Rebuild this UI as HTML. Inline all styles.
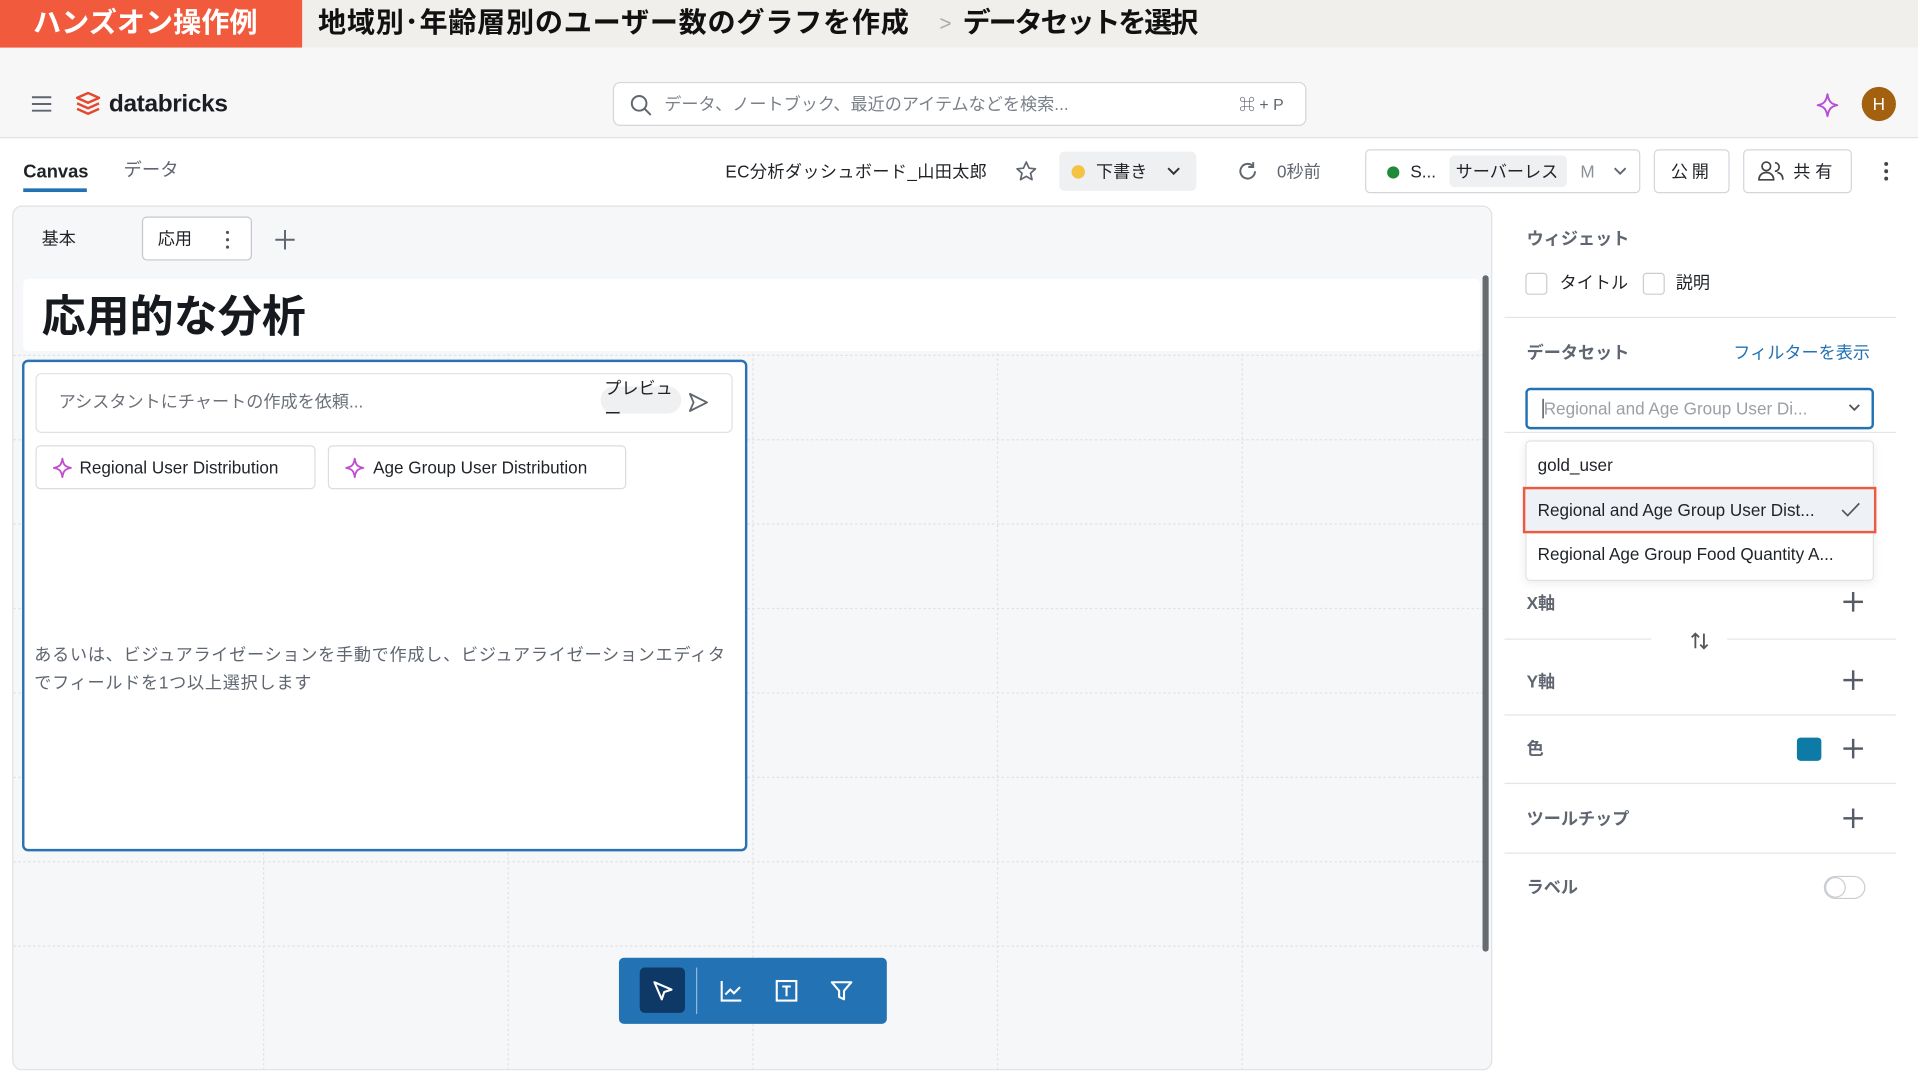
<!DOCTYPE html>
<html><head><meta charset="utf-8">
<style>
*{box-sizing:border-box;margin:0;padding:0}
html,body{width:1918px;height:1080px;overflow:hidden;background:#fff}
body{font-family:"Liberation Sans","Noto Sans CJK JP",sans-serif;color:#1f2328}
#w{position:absolute;left:0;top:0;width:1568px;height:883px;transform:scale(1.22321);transform-origin:0 0;background:#fff}
.a{position:absolute}
.t{position:absolute;white-space:nowrap;line-height:1}
.b{border:1px solid #d3d6db;border-radius:4px;background:#fff}
.gray{color:#5f6670}
.sec{font-weight:bold;font-size:14px;color:#5f6670}
.plus{position:absolute;width:16px;height:16px}
.plus:before,.plus:after{content:"";position:absolute;background:#555c66}
.plus:before{left:7px;top:0;width:1.6px;height:16px}
.plus:after{top:7px;left:0;height:1.6px;width:16px}
.hl{position:absolute;left:1230px;width:320px;height:1px;background:#e2e5e9}
</style></head><body><div id="w">
<!-- banner -->
<div class="a" style="left:0;top:0;width:1568px;height:39px;background:#f0efec"></div>
<div class="a" style="left:0;top:0;width:247px;height:39px;background:#f25a3e"></div>
<div class="t" style="left:27px;top:7px;font-size:23px;font-weight:bold;color:#fff">ハンズオン操作例</div>
<div class="t" style="left:260px;top:7px;font-size:23px;font-weight:bold;color:#111;letter-spacing:0.6px">地域別･年齢層別のユーザー数のグラフを作成</div>
<div class="t" style="left:768px;top:11px;font-size:17px;color:#aaa">&gt;</div>
<div class="t" style="left:787px;top:7px;font-size:23px;font-weight:bold;color:#111;letter-spacing:-1.8px">データセットを選択</div>
<!-- header -->
<div class="a" style="left:0;top:39px;width:1568px;height:74px;background:#f7f7f8;border-bottom:1px solid #dfe1e4"></div>
<svg class="a" style="left:26px;top:78px" width="16" height="14"><path d="M0 1.5h16M0 7h16M0 12.5h16" stroke="#5f6670" stroke-width="1.6"/></svg>
<svg class="a" style="left:62px;top:75px" width="20" height="21" viewBox="0 0 20 21"><path d="M1 5l9-4 9 4-9 4zM1 9.5l9 4 9-4M1 14l9 4 9-4" fill="none" stroke="#e4492e" stroke-width="2" stroke-linejoin="round"/></svg>
<div class="t" style="left:89px;top:75px;font-size:20px;font-weight:bold;color:#1b1f24;letter-spacing:-0.3px">databricks</div>
<div class="a b" style="left:501px;top:67px;width:567px;height:36px;border-radius:6px"></div>
<svg class="a" style="left:515px;top:77px" width="18" height="18"><circle cx="7.5" cy="7.5" r="6" fill="none" stroke="#5f6670" stroke-width="1.6"/><path d="M12 12l5 5" stroke="#5f6670" stroke-width="1.6"/></svg>
<div class="t gray" style="left:543px;top:78px;font-size:14px;color:#7a8089">データ、ノートブック、最近のアイテムなどを検索...</div>
<div class="t gray" style="left:1013px;top:79px;font-size:13px">⌘ + P</div>
<svg class="a" style="left:1485px;top:76px" width="18" height="20"><path d="M9 1C10 7 12 9 17 10 12 11 10 13 9 19 8 13 6 11 1 10 6 9 8 7 9 1Z" fill="none" stroke="#b84fd6" stroke-width="1.6" stroke-linejoin="round"/></svg>
<div class="a" style="left:1522px;top:71px;width:28px;height:28px;border-radius:50%;background:#a3600e;color:#fff;font-size:14px;text-align:center;line-height:28px">H</div>
<!-- tab row -->
<div class="t" style="left:19px;top:133px;font-size:15px;font-weight:bold">Canvas</div>
<div class="a" style="left:19px;top:154px;width:52px;height:3px;background:#2272b4"></div>
<div class="t gray" style="left:101px;top:132px;font-size:15px">データ</div>
<div class="t" style="left:593px;top:133px;font-size:14px;letter-spacing:0.3px">EC分析ダッシュボード_山田太郎</div>
<svg class="a" style="left:830px;top:131px" width="18" height="18"><path d="M9 1.5l2.3 5 5.2.5-4 3.6 1.2 5.3L9 13.2 4.3 15.9l1.2-5.3-4-3.6 5.2-.5z" fill="none" stroke="#5f6670" stroke-width="1.4" stroke-linejoin="round"/></svg>
<div class="a" style="left:866px;top:124px;width:112px;height:32px;border-radius:4px;background:#eef0f2"></div>
<div class="a" style="left:876px;top:135px;width:11px;height:11px;border-radius:50%;background:#f5c343"></div>
<div class="t" style="left:896px;top:133px;font-size:14px">下書き</div>
<svg class="a" style="left:954px;top:136px" width="11" height="8"><path d="M1 1.5l4.5 4.5 4.5-4.5" fill="none" stroke="#333" stroke-width="1.6"/></svg>
<svg class="a" style="left:1011px;top:131px" width="18" height="18"><path d="M15 9a6 6 0 1 1-2-4.5" fill="none" stroke="#5f6670" stroke-width="1.6"/><path d="M13.5 1.5v4h-4" fill="none" stroke="#5f6670" stroke-width="1.6"/></svg>
<div class="t gray" style="left:1044px;top:133px;font-size:14px">0秒前</div>
<div class="a b" style="left:1116px;top:122px;width:225px;height:36px"></div>
<div class="a" style="left:1134px;top:136px;width:10px;height:10px;border-radius:50%;background:#1f8a3a"></div>
<div class="t" style="left:1153px;top:133px;font-size:14px">S...</div>
<div class="a" style="left:1185px;top:127px;width:96px;height:26px;border-radius:4px;background:#eef0f2"></div>
<div class="t" style="left:1190px;top:133px;font-size:14px">サーバーレス</div>
<div class="t gray" style="left:1292px;top:133px;font-size:14px;color:#8a9098">M</div>
<svg class="a" style="left:1319px;top:136px" width="11" height="8"><path d="M1 1.5l4.5 4.5 4.5-4.5" fill="none" stroke="#5f6670" stroke-width="1.5"/></svg>
<div class="a b" style="left:1352px;top:122px;width:62px;height:36px"></div>
<div class="t" style="left:1366px;top:133px;font-size:14px;letter-spacing:3px">公開</div>
<div class="a b" style="left:1425px;top:122px;width:89px;height:36px"></div>
<svg class="a" style="left:1437px;top:131px" width="22" height="18"><circle cx="7" cy="5" r="3.5" fill="none" stroke="#444" stroke-width="1.4"/><path d="M1 16c0-4 3-6 6-6s6 2 6 6z" fill="none" stroke="#444" stroke-width="1.4"/><path d="M14 2a3.5 3.5 0 0 1 0 7M16 10c3 .5 4.5 2.5 4.5 6" fill="none" stroke="#444" stroke-width="1.4"/></svg>
<div class="t" style="left:1466px;top:133px;font-size:14px;letter-spacing:4px">共有</div>
<svg class="a" style="left:1539px;top:131px" width="6" height="18"><circle cx="3" cy="3" r="1.6" fill="#444"/><circle cx="3" cy="9" r="1.6" fill="#444"/><circle cx="3" cy="15" r="1.6" fill="#444"/></svg>
<!-- canvas -->
<div class="a" style="left:10px;top:168px;width:1210px;height:707px;background:#f6f7f9;border:1px solid #dfe1e4;border-radius:8px;overflow:hidden">
 <svg class="a" style="left:0;top:0" width="1210" height="707">
  <g stroke="#dfe2e6" stroke-width="1" stroke-dasharray="2 2">
   <path d="M204.5 120V707M404.5 120V707M604.5 120V707M804.5 120V707M1004.5 120V707"/>
   <path d="M0 121.5H1210M0 190.5H1210M0 259.5H1210M0 328.5H1210M0 397.5H1210M0 466.5H1210M0 535.5H1210M0 604.5H1210"/>
  </g>
 </svg>
</div>
<div class="t" style="left:34px;top:188px;font-size:14px">基本</div>
<div class="a b" style="left:116px;top:177px;width:90px;height:36px;border-color:#c3c8ce"></div>
<div class="t" style="left:129px;top:188px;font-size:14px">応用</div>
<svg class="a" style="left:184px;top:188px" width="4" height="16"><circle cx="2" cy="2" r="1.3" fill="#555"/><circle cx="2" cy="8" r="1.3" fill="#555"/><circle cx="2" cy="14" r="1.3" fill="#555"/></svg>
<svg class="a" style="left:225px;top:188px" width="16" height="16"><path d="M8 0v16M0 8h16" stroke="#5f6670" stroke-width="1.6"/></svg>
<div class="a" style="left:19px;top:228px;width:1191px;height:59px;background:#fff;border-radius:4px"></div>
<div class="t" style="left:34px;top:241px;font-size:36px;font-weight:bold;color:#161a1e">応用的な分析</div>
<div class="a" style="left:1212px;top:225px;width:5px;height:553px;border-radius:3px;background:#666b70"></div>
<!-- widget -->
<div class="a" style="left:18px;top:294px;width:593px;height:402px;background:#fff;border:2px solid #2c72b2;border-radius:5px"></div>
<div class="a b" style="left:29px;top:305px;width:570px;height:49px;border-radius:5px;border-color:#dfe1e4"></div>
<div class="t" style="left:48px;top:321px;font-size:14px;color:#6b7178">アシスタントにチャートの作成を依頼...</div>
<div class="a" style="left:491px;top:316px;width:66px;height:22px;border-radius:11px;background:#eef0f2"></div>
<div class="t" style="left:494px;top:310px;font-size:14px">プレビュ</div>
<div class="t" style="left:494px;top:331px;font-size:14px">ー</div>
<svg class="a" style="left:562px;top:320px" width="18" height="18"><path d="M2 2l14 7-14 7 3-7z" fill="none" stroke="#5f6670" stroke-width="1.5" stroke-linejoin="round"/></svg>
<div class="a b" style="left:29px;top:364px;width:229px;height:36px;border-color:#dadde1"></div>
<svg class="a" style="left:43px;top:374px" width="16" height="17"><path d="M8 1C8.8 6 10 7.5 15 8.5 10 9.5 8.8 11 8 16 7.2 11 6 9.5 1 8.5 6 7.5 7.2 6 8 1Z" fill="none" stroke="#c04fd0" stroke-width="1.5" stroke-linejoin="round"/></svg>
<div class="t" style="left:65px;top:375px;font-size:14px">Regional User Distribution</div>
<div class="a b" style="left:268px;top:364px;width:244px;height:36px;border-color:#dadde1"></div>
<svg class="a" style="left:282px;top:374px" width="16" height="17"><path d="M8 1C8.8 6 10 7.5 15 8.5 10 9.5 8.8 11 8 16 7.2 11 6 9.5 1 8.5 6 7.5 7.2 6 8 1Z" fill="none" stroke="#c04fd0" stroke-width="1.5" stroke-linejoin="round"/></svg>
<div class="t" style="left:305px;top:375px;font-size:14px">Age Group User Distribution</div>
<div class="t" style="left:28px;top:528px;font-size:14px;color:#5f6670;letter-spacing:0.6px">あるいは、ビジュアライゼーションを手動で作成し、ビジュアライゼーションエディタ</div>
<div class="t" style="left:28px;top:551px;font-size:14px;color:#5f6670;letter-spacing:0.6px">でフィールドを1つ以上選択します</div>
<!-- toolbar -->
<div class="a" style="left:506px;top:783px;width:219px;height:54px;background:#2272b4;border-radius:4px"></div>
<div class="a" style="left:523px;top:791px;width:37px;height:37px;background:#0e3966;border-radius:4px"></div>
<svg class="a" style="left:532px;top:800px" width="20" height="20"><path d="M3 3l14 6-6 2-2 6z" fill="none" stroke="#fff" stroke-width="1.7" stroke-linejoin="round"/></svg>
<div class="a" style="left:569px;top:791px;width:1px;height:38px;background:#8fb8dd"></div>
<svg class="a" style="left:588px;top:800px" width="20" height="20"><path d="M2 2v16h16" fill="none" stroke="#fff" stroke-width="1.7"/><path d="M5 13l4-4 3 3 5-5" fill="none" stroke="#fff" stroke-width="1.7"/></svg>
<svg class="a" style="left:633px;top:800px" width="20" height="20"><rect x="2" y="2" width="16" height="16" fill="none" stroke="#fff" stroke-width="1.7"/><path d="M6.5 6.5h7M10 6.5v8" stroke="#fff" stroke-width="1.7"/></svg>
<svg class="a" style="left:678px;top:800px" width="20" height="20"><path d="M2 3h16l-6 7v7l-4-2v-5z" fill="none" stroke="#fff" stroke-width="1.7" stroke-linejoin="round"/></svg>
<!-- right panel -->
<div class="t sec" style="left:1248px;top:188px">ウィジェット</div>
<div class="a" style="left:1247px;top:223px;width:18px;height:18px;border:1px solid #c9cdd2;border-radius:3px"></div>
<div class="t" style="left:1275px;top:224px;font-size:14px">タイトル</div>
<div class="a" style="left:1343px;top:223px;width:18px;height:18px;border:1px solid #c9cdd2;border-radius:3px"></div>
<div class="t" style="left:1370px;top:224px;font-size:14px">説明</div>
<div class="hl" style="top:259px"></div>
<div class="t sec" style="left:1248px;top:281px">データセット</div>
<div class="t" style="left:1417px;top:281px;font-size:14px;color:#2272b4">フィルターを表示</div>
<div class="a" style="left:1247px;top:317px;width:285px;height:34px;border:2px solid #2272b4;border-radius:4px;background:#fff"></div>
<div class="a" style="left:1261px;top:326px;width:1px;height:16px;background:#333"></div>
<div class="t" style="left:1262px;top:327px;font-size:14px;color:#9aa0a6">Regional and Age Group User Di...</div>
<svg class="a" style="left:1511px;top:330px" width="10" height="7"><path d="M1 1l4 4 4-4" fill="none" stroke="#555" stroke-width="1.5"/></svg>
<div class="hl" style="top:353px"></div>
<div class="a" style="left:1247px;top:360px;width:285px;height:115px;background:#fff;border:1px solid #e1e3e6;border-radius:4px;box-shadow:0 2px 8px rgba(0,0,0,.08)"></div>
<div class="t" style="left:1257px;top:373px;font-size:14px">gold_user</div>
<div class="a" style="left:1245px;top:398px;width:289px;height:38px;background:#eef1f6;border:2px solid #ec5a3f"></div>
<div class="t" style="left:1257px;top:410px;font-size:14px">Regional and Age Group User Dist...</div>
<svg class="a" style="left:1505px;top:410px" width="16" height="13"><path d="M1 7l4.5 4.5L15 1.5" fill="none" stroke="#555" stroke-width="1.4"/></svg>
<div class="t" style="left:1257px;top:446px;font-size:14px">Regional Age Group Food Quantity A...</div>
<div class="t sec" style="left:1248px;top:486px">X軸</div>
<div class="plus" style="left:1507px;top:484px"></div>
<div class="hl" style="top:522px;width:120px"></div>
<div class="hl" style="top:522px;left:1412px;width:138px"></div>
<svg class="a" style="left:1381px;top:515px" width="18" height="18"><path d="M5 15V3M2 6l3-3 3 3M12 3v12M9 12l3 3 3-3" fill="none" stroke="#555" stroke-width="1.5"/></svg>
<div class="t sec" style="left:1248px;top:550px">Y軸</div>
<div class="plus" style="left:1507px;top:548px"></div>
<div class="hl" style="top:584px"></div>
<div class="t sec" style="left:1248px;top:605px">色</div>
<div class="a" style="left:1469px;top:603px;width:20px;height:19px;border-radius:3px;background:#0e7aa6"></div>
<div class="plus" style="left:1507px;top:604px"></div>
<div class="hl" style="top:640px"></div>
<div class="t sec" style="left:1248px;top:662px">ツールチップ</div>
<div class="plus" style="left:1507px;top:661px"></div>
<div class="hl" style="top:697px"></div>
<div class="t sec" style="left:1248px;top:718px">ラベル</div>
<div class="a" style="left:1491px;top:716px;width:34px;height:19px;border:1px solid #c9cdd2;border-radius:10px"></div>
<div class="a" style="left:1492px;top:717px;width:17px;height:17px;border:1px solid #c9cdd2;border-radius:50%;background:#fff"></div>
</div></body></html>
